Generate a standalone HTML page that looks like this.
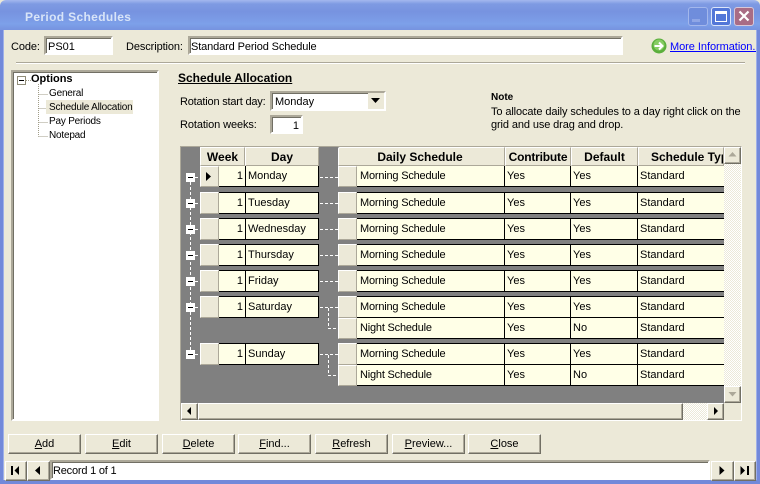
<!DOCTYPE html>
<html><head><meta charset="utf-8"><style>
html,body{margin:0;padding:0;width:760px;height:484px;overflow:hidden;background:#ECE9D8}
body{position:relative;font:11px/13px "Liberation Sans",sans-serif;color:#000}
div{position:absolute;box-sizing:border-box;white-space:nowrap}
.in{background:#fff;border:2px solid;border-color:#ACA899 #fff #fff #ACA899;box-shadow:inset 1px 1px 0 #716F64;padding:2px 0 0 2px;line-height:14px}
.sk{border:1px solid;border-color:#ACA899 #fff #fff #ACA899}
.btn{background:#ECE9D8;border:1px solid;border-color:#fff #716F64 #716F64 #fff;box-shadow:inset -1px -1px 0 #ACA899;text-align:center;line-height:19px;height:20px;width:73px;top:434px}
.hd{top:147px;height:19px;background:#ECE9D8;border:1px solid;border-color:#fff #ACA899 #ACA899 #fff;text-align:center;font-weight:bold;font-size:12px;line-height:18px}
.sel{background:#ECE9D8;border:1px solid;border-color:#fff #ACA899 #ACA899 #fff;width:19px;height:22px;left:200px}
.c{background:#FFFFE7;border-right:1px solid #000;border-bottom:1px solid #000;border-top:1px solid #000;height:22px;line-height:21px;padding-left:2px;overflow:hidden}
.n{border-top:0;height:21px;line-height:21px;top:166px}
.m{padding-left:3px;letter-spacing:-.2px}
.tr{line-height:14px;font-size:10px;letter-spacing:-.2px}
u{text-decoration:underline}
</style></head><body>
<!-- window frame -->
<div style="left:0;top:0;width:760px;height:30px;background:linear-gradient(180deg,#A4B8EE 0,#7E9AE2 4px,#7793E0 12px,#7DA0E9 24px,#7793DF 30px);border-radius:6px 6px 0 0"></div>
<div style="left:0;top:30px;width:4px;height:454px;background:#7289DA;border-right:1px solid #9FB0E8"></div>
<div style="left:756px;top:30px;width:4px;height:454px;background:#7289DA;border-left:1px solid #9FB0E8"></div>
<div style="left:0;top:480px;width:760px;height:4px;background:#7289DA"></div>
<div style="left:25px;top:10px;font-weight:bold;font-size:12px;line-height:15px;color:#D8E4F8;letter-spacing:.35px">Period Schedules</div>
<!-- window buttons -->
<div style="left:688px;top:7px;width:20px;height:19px;background:#6F8DDC;border:1px solid #A3B7EC;border-radius:3px"></div>
<div style="left:692px;top:19px;width:8px;height:3px;background:#8FA6E6"></div>
<div style="left:711px;top:7px;width:20px;height:19px;background:#5377D8;border:1px solid #DCE6FA;border-radius:3px"></div>
<div style="left:715px;top:11px;width:12px;height:11px;border:1px solid #fff;border-top:3px solid #fff"></div>
<div style="left:734px;top:7px;width:20px;height:19px;background:#A96C85;border:1px solid #D8C8D8;border-radius:3px"></div>
<svg style="position:absolute;left:738px;top:10px" width="12" height="12"><path d="M1.500 1.500L10.500 10.500M10.500 1.500L1.500 10.500" stroke="#fff" stroke-width="2.200"/></svg>
<!-- top row -->
<div style="left:11px;top:41px;letter-spacing:-.1px">Code:</div>
<div class="in" style="left:44px;top:36px;width:69px;height:19px">PS01</div>
<div style="left:126px;top:41px;letter-spacing:-.1px">Description:</div>
<div class="in" style="left:188px;top:36px;width:435px;height:19px;letter-spacing:-.12px;padding-left:1px">Standard Period Schedule</div>
<svg style="position:absolute;left:651px;top:38px" width="16" height="16"><circle cx="8" cy="8" r="7.500" fill="#5BAF3C"/><circle cx="8" cy="7" r="5.500" fill="#86CC62"/><path d="M3.500 8H11M8 4.500L11.500 8L8 11.500" fill="none" stroke="#fff" stroke-width="2"/></svg>
<div style="left:670px;top:41px;color:#00f;text-decoration:underline;width:86px;overflow:hidden;letter-spacing:-.05px">More Information...</div>
<div style="left:16px;top:62px;width:729px;height:2px;background:#ACA899;border-bottom:1px solid #fff"></div>
<!-- tree -->
<div class="in" style="left:11px;top:70px;width:148px;height:351px"></div>
<div style="left:17px;top:76px;width:9px;height:9px;border:1px solid #908C78;background:#fff"></div>
<div style="left:19px;top:80px;width:5px;height:1px;background:#000"></div>
<div style="left:31px;top:73px;font-weight:bold">Options</div>
<svg style="position:absolute;left:26px;top:78px" width="24" height="62"><path d="M0 2.500H5M12.500 6V58.500M12.500 16.500H22M12.500 30.500H22M12.500 44.500H22M12.500 58.500H22" stroke="#A09C88" stroke-dasharray="1 1" fill="none"/></svg>
<div style="left:46px;top:100px;width:87px;height:14px;background:#ECE9D8"></div>
<div class="tr" style="left:49px;top:87px">General</div>
<div class="tr" style="left:49px;top:101px">Schedule Allocation</div>
<div class="tr" style="left:49px;top:115px">Pay Periods</div>
<div class="tr" style="left:49px;top:129px">Notepad</div>
<!-- section -->
<div style="left:178px;top:71px;font-weight:bold;text-decoration:underline;font-size:12px;line-height:14px">Schedule Allocation</div>
<div style="left:180px;top:96px;letter-spacing:-.2px">Rotation start day:</div>
<div class="in" style="left:270px;top:91px;width:116px;height:20px;padding-left:3px">Monday</div>
<div style="left:368px;top:93px;width:16px;height:16px;background:#ECE9D8"></div>
<svg style="position:absolute;left:371px;top:98px" width="10" height="6"><path d="M0 0H9L4.500 5z" fill="#000"/></svg>
<div style="left:180px;top:119px;letter-spacing:-.1px">Rotation weeks:</div>
<div class="in" style="left:270px;top:115px;width:33px;height:19px;text-align:right;padding-right:2px">1</div>
<div style="left:491px;top:91px;font-weight:bold;font-size:10px">Note</div>
<div style="left:491px;top:106px;line-height:13px;letter-spacing:-.11px">To allocate daily schedules to a day right click on the<br>grid and use drag and drop.</div>
<!-- grid -->
<div class="sk" style="left:180px;top:146px;width:562px;height:275px;background:#808080"></div>
<div class="hd" style="left:200px;width:45px">Week</div>
<div class="hd" style="left:245px;width:74px">Day</div>
<div class="hd" style="left:338px;width:167px;border-radius:2px 0 0 0;padding-right:3px">Daily Schedule</div>
<div class="hd" style="left:505px;width:66px;letter-spacing:-.2px">Contribute</div>
<div class="hd" style="left:571px;width:67px">Default</div>
<div class="hd" style="left:638px;width:86px;overflow:hidden;text-align:left;padding-left:12px">Schedule Type</div>

<!-- left rows -->
<div class="sel" style="top:166px;height:21px"></div><div class="c n" style="left:219px;width:27px;text-align:right;padding-right:2px">1</div><div class="c n" style="left:246px;width:73px">Monday</div>
<div class="sel" style="top:192px"></div><div class="c" style="left:219px;top:192px;width:27px;text-align:right;padding-right:2px">1</div><div class="c" style="left:246px;top:192px;width:73px">Tuesday</div>
<div class="sel" style="top:218px"></div><div class="c" style="left:219px;top:218px;width:27px;text-align:right;padding-right:2px">1</div><div class="c" style="left:246px;top:218px;width:73px">Wednesday</div>
<div class="sel" style="top:244px"></div><div class="c" style="left:219px;top:244px;width:27px;text-align:right;padding-right:2px">1</div><div class="c" style="left:246px;top:244px;width:73px">Thursday</div>
<div class="sel" style="top:270px"></div><div class="c" style="left:219px;top:270px;width:27px;text-align:right;padding-right:2px">1</div><div class="c" style="left:246px;top:270px;width:73px">Friday</div>
<div class="sel" style="top:296px"></div><div class="c" style="left:219px;top:296px;width:27px;text-align:right;padding-right:2px">1</div><div class="c" style="left:246px;top:296px;width:73px">Saturday</div>
<div class="sel" style="top:343px"></div><div class="c" style="left:219px;top:343px;width:27px;text-align:right;padding-right:2px">1</div><div class="c" style="left:246px;top:343px;width:73px">Sunday</div>
<svg style="position:absolute;left:205px;top:171px" width="8" height="11"><path d="M1 1V10L6 5.500z" fill="#000"/></svg>

<!-- right rows -->
<div class="sel" style="left:338px;top:166px;height:21px"></div><div class="c n m" style="left:357px;width:148px">Morning Schedule</div><div class="c n" style="left:505px;width:66px">Yes</div><div class="c n" style="left:571px;width:67px">Yes</div><div class="c n" style="left:638px;width:86px;border-right:0">Standard</div>
<div class="sel" style="left:338px;top:192px"></div><div class="c m" style="left:357px;top:192px;width:148px">Morning Schedule</div><div class="c" style="left:505px;top:192px;width:66px">Yes</div><div class="c" style="left:571px;top:192px;width:67px">Yes</div><div class="c" style="left:638px;top:192px;width:86px;border-right:0">Standard</div>
<div class="sel" style="left:338px;top:218px"></div><div class="c m" style="left:357px;top:218px;width:148px">Morning Schedule</div><div class="c" style="left:505px;top:218px;width:66px">Yes</div><div class="c" style="left:571px;top:218px;width:67px">Yes</div><div class="c" style="left:638px;top:218px;width:86px;border-right:0">Standard</div>
<div class="sel" style="left:338px;top:244px"></div><div class="c m" style="left:357px;top:244px;width:148px">Morning Schedule</div><div class="c" style="left:505px;top:244px;width:66px">Yes</div><div class="c" style="left:571px;top:244px;width:67px">Yes</div><div class="c" style="left:638px;top:244px;width:86px;border-right:0">Standard</div>
<div class="sel" style="left:338px;top:270px"></div><div class="c m" style="left:357px;top:270px;width:148px">Morning Schedule</div><div class="c" style="left:505px;top:270px;width:66px">Yes</div><div class="c" style="left:571px;top:270px;width:67px">Yes</div><div class="c" style="left:638px;top:270px;width:86px;border-right:0">Standard</div>
<div class="sel" style="left:338px;top:296px"></div><div class="c m" style="left:357px;top:296px;width:148px">Morning Schedule</div><div class="c" style="left:505px;top:296px;width:66px">Yes</div><div class="c" style="left:571px;top:296px;width:67px">Yes</div><div class="c" style="left:638px;top:296px;width:86px;border-right:0">Standard</div>
<div class="sel" style="left:338px;top:318px;height:21px"></div><div class="c n m" style="left:357px;top:318px;width:148px">Night Schedule</div><div class="c n" style="left:505px;top:318px;width:66px">Yes</div><div class="c n" style="left:571px;top:318px;width:67px">No</div><div class="c n" style="left:638px;top:318px;width:86px;border-right:0">Standard</div>
<div class="sel" style="left:338px;top:343px"></div><div class="c m" style="left:357px;top:343px;width:148px">Morning Schedule</div><div class="c" style="left:505px;top:343px;width:66px">Yes</div><div class="c" style="left:571px;top:343px;width:67px">Yes</div><div class="c" style="left:638px;top:343px;width:86px;border-right:0">Standard</div>
<div class="sel" style="left:338px;top:365px;height:21px"></div><div class="c n m" style="left:357px;top:365px;width:148px">Night Schedule</div><div class="c n" style="left:505px;top:365px;width:66px">Yes</div><div class="c n" style="left:571px;top:365px;width:67px">No</div><div class="c n" style="left:638px;top:365px;width:86px;border-right:0">Standard</div>

<!-- tree lines in grid -->
<svg style="position:absolute;left:181px;top:165px" width="160" height="220">
<g fill="none" stroke="#fff" stroke-dasharray="3 2">
<path d="M9.500 12V188"/>
<path d="M14 12.500H19M14 38.500H19M14 64.500H19M14 90.500H19M14 116.500H19M14 142.500H19M14 189.500H19"/>
<path d="M139 12.500H157M139 38.500H157M139 64.500H157M139 90.500H157M139 116.500H157M139 142.500H157M139 189.500H157"/>
<path d="M147.500 143V163.500H157M147.500 190V210.500H157"/>
</g>
<g fill="#fff"><rect x="5" y="8" width="9" height="9"/><rect x="5" y="34" width="9" height="9"/><rect x="5" y="60" width="9" height="9"/><rect x="5" y="86" width="9" height="9"/><rect x="5" y="112" width="9" height="9"/><rect x="5" y="138" width="9" height="9"/><rect x="5" y="185" width="9" height="9"/></g>
<g fill="#000"><rect x="7" y="12" width="5" height="1"/><rect x="7" y="38" width="5" height="1"/><rect x="7" y="64" width="5" height="1"/><rect x="7" y="90" width="5" height="1"/><rect x="7" y="116" width="5" height="1"/><rect x="7" y="142" width="5" height="1"/><rect x="7" y="189" width="5" height="1"/></g>
</svg>

<!-- vertical scrollbar -->
<div style="left:724px;top:147px;width:17px;height:256px;background:repeating-conic-gradient(#ECE9D8 0 25%,#fff 0 50%) 0 0/2px 2px"></div>
<div class="btn" style="left:724px;top:147px;width:17px;height:17px"></div>
<svg style="position:absolute;left:728px;top:152px" width="9" height="6"><path d="M4.500 0L8.500 4.500H0.500z" fill="#ACA899"/></svg>
<div class="btn" style="left:724px;top:386px;width:17px;height:17px"></div>
<svg style="position:absolute;left:728px;top:392px" width="9" height="6"><path d="M0.500 0H8.500L4.500 4.500z" fill="#ACA899"/></svg>
<!-- horizontal scrollbar -->
<div style="left:181px;top:403px;width:560px;height:17px;background:repeating-conic-gradient(#ECE9D8 0 25%,#fff 0 50%) 0 0/2px 2px"></div>
<div class="btn" style="left:181px;top:403px;width:17px;height:17px"></div>
<svg style="position:absolute;left:186px;top:407px" width="6" height="9"><path d="M5 0V8L1 4z" fill="#000"/></svg>
<div class="btn" style="left:198px;top:403px;width:485px;height:17px"></div>
<div class="btn" style="left:707px;top:403px;width:17px;height:17px"></div>
<svg style="position:absolute;left:713px;top:407px" width="6" height="9"><path d="M1 0V8L5 4z" fill="#000"/></svg>
<div style="left:724px;top:403px;width:17px;height:17px;background:#ECE9D8"></div>

<!-- buttons -->
<div class="btn" style="left:8px"><u>A</u>dd</div>
<div class="btn" style="left:85px"><u>E</u>dit</div>
<div class="btn" style="left:162px"><u>D</u>elete</div>
<div class="btn" style="left:238px"><u>F</u>ind...</div>
<div class="btn" style="left:315px"><u>R</u>efresh</div>
<div class="btn" style="left:392px"><u>P</u>review...</div>
<div class="btn" style="left:468px"><u>C</u>lose</div>

<!-- nav -->
<div class="btn" style="left:5px;top:461px;width:22px"></div>
<div class="btn" style="left:27px;top:461px;width:23px"></div>
<div class="in" style="left:50px;top:460px;width:660px;height:20px;letter-spacing:-.2px;padding-left:1px">Record 1 of 1</div>
<div class="btn" style="left:711px;top:461px;width:23px"></div>
<div class="btn" style="left:734px;top:461px;width:22px"></div>
<svg style="position:absolute;left:10px;top:465px" width="12" height="11"><path d="M1 1H3V10H1zM9 1V10L4.500 5.500z" fill="#000"/></svg>
<svg style="position:absolute;left:33px;top:465px" width="9" height="11"><path d="M7 1V10L2 5.500z" fill="#000"/></svg>
<svg style="position:absolute;left:718px;top:465px" width="9" height="11"><path d="M1.500 1V10L6.500 5.500z" fill="#000"/></svg>
<svg style="position:absolute;left:739px;top:465px" width="12" height="11"><path d="M1.500 1V10L6 5.500zM8 1H10V10H8z" fill="#000"/></svg>
</body></html>
